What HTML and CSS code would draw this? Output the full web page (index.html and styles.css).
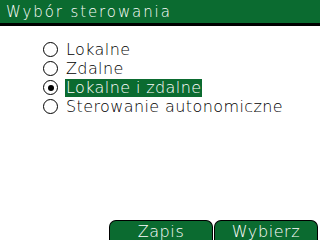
FILE: index.html
```html
<!DOCTYPE html>
<html lang="pl">
<head>
<meta charset="utf-8">
<link rel="stylesheet" href="styles.css">
</head>
<body>
<div class="screen">
  <header class="title-bar">Wybór sterowania</header>
  <ul class="options">
    <li class="option"><span class="radio"></span><span class="label">Lokalne</span></li>
    <li class="option"><span class="radio"></span><span class="label">Zdalne</span></li>
    <li class="option selected"><span class="radio checked"></span><span class="label">Lokalne i zdalne</span></li>
    <li class="option"><span class="radio"></span><span class="label">Sterowanie autonomiczne</span></li>
  </ul>
  <footer class="softkeys">
    <div class="softkey">Zapis</div>
    <div class="softkey">Wybierz</div>
  </footer>
</div>
</body>
</html>
```
FILE: styles.css
```css
html, body {
  margin: 0;
  padding: 0;
  background: #ffffff;
}
.screen {
  width: 320px;
  height: 240px;
  display: flex;
  flex-direction: column;
  font-family: "DejaVu Sans", sans-serif;
  font-weight: 200;
  color: #000;
  overflow: hidden;
}
.title-bar {
  height: 23px;
  line-height: 24px;
  background: #0b6b30;
  border-bottom: 3px solid #000;
  color: #fff;
  font-size: 15px;
  letter-spacing: 1.9px;
  padding-left: 6px;
}
.options {
  list-style: none;
  margin: 14px 0 0 0;
  padding: 0 0 0 43px;
}
.option {
  height: 19px;
  display: flex;
  align-items: center;
  font-size: 16px;
  letter-spacing: 0.4px;
}
.radio {
  width: 13px;
  height: 13px;
  border: 1px solid #000;
  border-radius: 50%;
  margin-right: 7px;
  display: flex;
  align-items: center;
  justify-content: center;
  flex: none;
}
.radio.checked::after {
  content: "";
  width: 6px;
  height: 6px;
  border-radius: 50%;
  background: #000;
}
.label {
  padding: 0 1px;
  line-height: 18px;
}
.selected .label {
  background: #0b6b30;
  color: #fff;
}
.softkeys {
  margin-top: auto;
  display: flex;
  justify-content: flex-end;
  gap: 1px;
  padding-right: 2px;
}
.softkey {
  width: 102px;
  height: 19px;
  border: 1px solid #000;
  border-bottom: none;
  border-radius: 7px 7px 0 0;
  background: #0b6b30;
  color: #fff;
  font-size: 16px;
  letter-spacing: 0.6px;
  text-align: center;
  line-height: 21px;
}
```
